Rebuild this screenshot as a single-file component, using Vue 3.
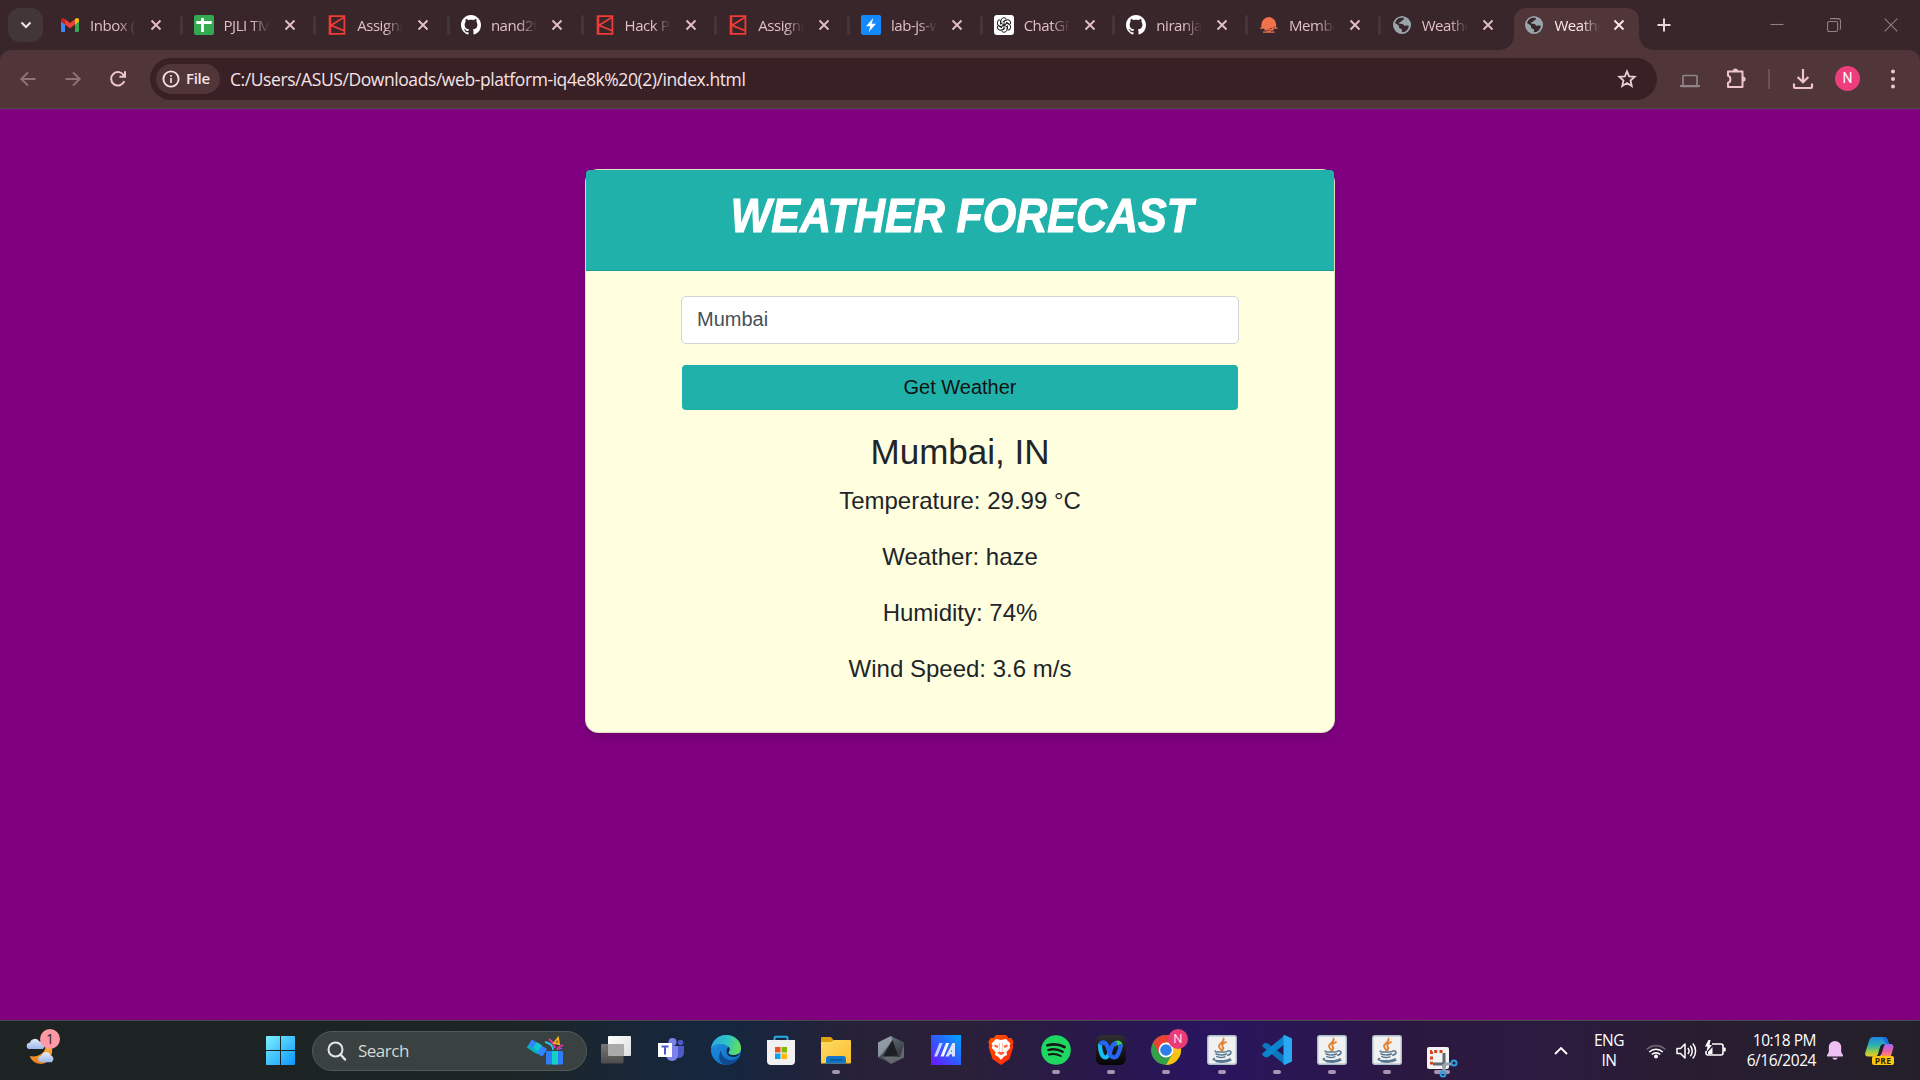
<script setup>
const kalvium = '<path fill="none" stroke="#f23b36" stroke-width="1.8" d="M2.6 1.2h14.8v17.6H2.6zM3.4 1.5v17M16.6 2.4L4 10.3l12.6 5.2"/>'
const github = '<path fill="#fff" transform="scale(1.25)" d="M8 0C3.58 0 0 3.58 0 8c0 3.54 2.29 6.53 5.47 7.59.4.07.55-.17.55-.38 0-.19-.01-.82-.01-1.49-2.01.37-2.53-.49-2.69-.94-.09-.23-.48-.94-.82-1.13-.28-.15-.68-.52-.01-.53.63-.01 1.08.58 1.23.82.72 1.21 1.87.87 2.33.66.07-.52.28-.87.51-1.07-1.78-.2-3.64-.89-3.64-3.95 0-.87.31-1.59.82-2.15-.08-.2-.36-1.02.08-2.12 0 0 .67-.21 2.2.82.64-.18 1.32-.27 2-.27s1.36.09 2 .27c1.53-1.04 2.2-.82 2.2-.82.44 1.1.16 1.92.08 2.12.51.56.82 1.27.82 2.15 0 3.07-1.87 3.75-3.65 3.95.29.25.54.73.54 1.48 0 1.07-.01 1.93-.01 2.2 0 .21.15.46.55.38A8.01 8.01 0 0 0 16 8c0-4.42-3.58-8-8-8z"/>'
const globe = '<circle cx="10" cy="10" r="8.8" fill="#9aa4ac"/><path fill="#38262a" d="M3 8c.2-2.800 2-5 5-5.600l3.500-.2c1 1.600.2 2.900-1.200 3.200-1.300.3-1.200 1.600-2.500 1.900-.9.300-1 1.200-.1 1.500 1.700.200 3.300-.1 4 1.100.700 1.200 2 .8 3.200.7 1.200 0 2 .2 1.900.9-.6 3.200-2.800 5.300-5.800 5.900-1.100.1-1.400-.9-1.100-1.700.4-1.200-.1-1.800-1.200-2-1.600-.200-2.100-1.400-1.500-2.600C6.500 9.600 4.500 9.400 3 8z"/><circle cx="10" cy="10" r="8.100" fill="none" stroke="#9aa4ac" stroke-width="1.400"/>'
const gmail = '<path fill="#4285f4" d="M1 6l4 3v8H2.200A1.200 1.200 0 0 1 1 15.800z"/><path fill="#34a853" d="M19 6l-4 3v8h2.800a1.200 1.200 0 0 0 1.200-1.200z"/><path fill="#ea4335" d="M5 4.200l5 3.900 5-3.900v5.200l-5 3.900-5-3.900z"/><path fill="#c5221f" d="M1 5c0-2 2-2.600 3.300-1.500L5 4.200v5.200L1 6.500z"/><path fill="#fbbc04" d="M19 5c0-2-2-2.600-3.300-1.500l-.7.700v5.200l4-2.900z"/>'
const sheets = '<rect width="20" height="20" rx="2" fill="#34a853"/><path d="M2.300 7.500h15.400M8.500 3v14" stroke="#fff" stroke-width="2.800"/>'
const bolt = '<rect width="20" height="20" rx="2" fill="#1389fd"/><path fill="#fff" d="M12.300 3L5 11.200h4.300L7.700 17 15 8.800h-4.300z"/>'
const gpt = '<rect width="20" height="20" rx="3" fill="#fff"/><g fill="none" stroke="#222" stroke-width="1">' +
  [0, 60, 120, 180, 240, 300].map((a) => `<path transform="rotate(${a} 10 10)" d="M6.900 8.200V5.900a3.100 3.100 0 0 1 5.600-1.900M6.900 8.200l3.100 1.700M8.700 6.800l3.400-2"/>`).join('') +
  '</g>'
const sunset = '<path fill="#f0714a" d="M1 13c.8-.3 1.200-.8 1.500-1.500A8 8 0 0 1 10 2a7.800 7.800 0 0 1 7 9.500c0 .5.700 1 1.500 1.200v1.100h-4v1.600h-3v1.100h4v1.200H4v-1.200h4v-1.100H5.500v-1.600H1z"/><path fill="#38262a" d="M11 13h1.500v1H11zM14.500 11.800h1v1.200h-1zM8 14.800h3v.7H8z"/>'

const tabs = [
  { t: 'Inbox (1', i: gmail },
  { t: 'PJLI TMS', i: sheets },
  { t: 'Assignm', i: kalvium },
  { t: 'nand2te', i: github },
  { t: 'Hack Pr', i: kalvium },
  { t: 'Assignm', i: kalvium },
  { t: 'lab-js-w', i: bolt },
  { t: 'ChatGPT', i: gpt },
  { t: 'niranjan', i: github },
  { t: 'Membe', i: sunset },
  { t: 'Weathe', i: globe },
  { t: 'Weathe', i: globe, active: true },
]

const java = '<rect x=".7" y=".7" width="28.600" height="28.600" rx="2" fill="#f1f1f1" stroke="#a9bcc8" stroke-width="1.400"/><g fill="none" stroke-linecap="round"><path stroke="#e5822e" stroke-width="1.800" d="M16.500 3.500c1.500 3.500-5 5-4.500 8 .2 1.600 2 2.400 2.500 4M19 7.200c-4 1.600-4.600 3-3.200 4.700 1 1.200.4 2.300-.4 3.100"/><path stroke="#58788f" stroke-width="1.500" d="M8.500 16c-2.500 1.300 10 1.500 12.500.1M9 18.800c1 1.300 8 1.500 10.500.2M9.800 21.500c1.500 1.300 6 1.300 8 .3M21 16c4-1 4 3.300-.3 4.200M7.500 23.500c-6 2 11 3.600 15.500.3M9 26.600c5 .8 12 .4 15-1.400"/></g>'

const apps = [
  { n: 'taskview', s: '<defs><linearGradient id="tv1" x2="0" y2="1"><stop stop-color="#777"/><stop offset="1" stop-color="#4c4c4c"/></linearGradient><linearGradient id="tv2" x2="1" y2="1"><stop stop-color="#fff"/><stop offset="1" stop-color="#ddd"/></linearGradient></defs><rect x="7" y="1" width="23" height="20" rx="1" fill="url(#tv2)"/><rect x="0" y="9" width="22.500" height="19.500" rx="1" fill="url(#tv1)"/><path d="M7 9h15.500v12H8a1 1 0 0 1-1-1z" fill="#aaa"/>' },
  { n: 'teams', s: '<circle cx="16.500" cy="7" r="4" fill="#7b83eb"/><circle cx="24.500" cy="7.500" r="2.800" fill="#5059c9"/><path fill="#5059c9" d="M19 11h9v7a5 5 0 0 1-5 5h-4z"/><path fill="#7b83eb" d="M10 11h12v9a6 6 0 0 1-12 0z"/><rect x="2" y="8" width="14" height="14" fill="#fff"/><path d="M5.500 11.500h7M9 11.500v8" stroke="#5059c9" stroke-width="2"/>' },
  { n: 'edge', s: '<defs><linearGradient id="ed1" y1=".3" x2="1" y2=".5"><stop stop-color="#2aa6e0"/><stop offset=".5" stop-color="#2bc3c6"/><stop offset="1" stop-color="#66e05a"/></linearGradient><linearGradient id="ed2" x2=".6" y2="1"><stop stop-color="#1d93e2"/><stop offset="1" stop-color="#1271c8"/></linearGradient></defs><circle cx="15" cy="15" r="15" fill="url(#ed2)"/><path fill="#104a8e" d="M10 15c0 7 6 11 12 10 3-.5 5.200-2 6-4C26 27 21 30 15 30 9 29 6 23 10 15z"/><path fill="url(#ed1)" d="M0 14C1 5 8 0 15 0c9 0 15 6 15 13 0 5-4 7-8 7-4 0-5.500-1.500-4.500-3 2-4-1.500-8-7-8C5 9 1 11 0 14z"/><path fill="#14294a" d="M17.500 11.500c1.600 1.500 1.700 3.300.4 5.300-1.200 1.800.6 3.300 4.600 3.300 3 0 5-.8 6.500-2.300-.8 2.700-3 4.200-6.500 4.200-6 0-9.500-5-5-10.500z"/>' },
  { n: 'store', s: '<path d="M8.500 7V2.700A1 1 0 0 1 9.500 1.700h11a1 1 0 0 1 1 1V7" fill="none" stroke="#29a9e1" stroke-width="2"/><path fill="#f1f1f1" d="M1 5h28v21a4 4 0 0 1-4 4H5a4 4 0 0 1-4-4z"/><path fill="#f25022" d="M9 12h5.500v5.500H9z"/><path fill="#7fba00" d="M15.500 12H21v5.500h-5.500z"/><path fill="#00a4ef" d="M9 18.500h5.500V24H9z"/><path fill="#ffb900" d="M15.500 18.500H21V24h-5.500z"/>' },
  { n: 'files', run: 1, s: '<defs><linearGradient id="fo" x2="1" y2="1"><stop stop-color="#ffdb68"/><stop offset="1" stop-color="#fbbd2c"/></linearGradient></defs><path fill="#dfa10e" d="M0 8V3.200A1.200 1.200 0 0 1 1.200 2H10l2.500 3v3z"/><path fill="url(#fo)" d="M0 7h10l3-2h16a1 1 0 0 1 1 1v21.500a1 1 0 0 1-1 1H0z"/><path fill="#1177c9" d="M5 28.500V24a3 3 0 0 1 3-3h14a3 3 0 0 1 3 3v4.500z"/><path d="M9 24.800h12" stroke="#0b4f94" stroke-width="1.300" stroke-linecap="round"/>' },
  { n: 'armoury', s: '<defs><linearGradient id="hx" x2=".6" y2="1"><stop stop-color="#6d7a88"/><stop offset="1" stop-color="#303238"/></linearGradient></defs><path fill="url(#hx)" d="M15 1l13 6.500v15L15 29 2 22.500v-15z"/><path fill="#aab5bf" d="M2 7.500L15 1l1.500 4L6 19l-4 3.500z" opacity=".65"/><path fill="#8b9097" d="M28 10v12.500L15 29 6 21.500l18 .5z" opacity=".55"/><path fill="#1c1f24" d="M16.500 5L22 20.500 7 21.500z"/>' },
  { n: 'myasus', s: '<defs><linearGradient id="ma" x1="0" y1="1" x2="1" y2="0"><stop stop-color="#6d12ff"/><stop offset=".5" stop-color="#2f5dff"/><stop offset="1" stop-color="#00a6ff"/></linearGradient></defs><rect width="30" height="30" fill="url(#ma)"/><path fill="#c3d2ff" d="M3 21.500L8.500 8h3.200L6.200 21.500z"/><path fill="#f2f5ff" d="M9.500 21.500L15 8h3.200l-5.500 13.500z"/><path fill="#dbe4ff" d="M14.500 21.500L21.500 8H24v13.500h-3V14.500l-3.200 7zM17.500 17h4v2.200h-4z"/>' },
  { n: 'brave', s: '<defs><linearGradient id="br" x2="1" y2="1"><stop stop-color="#ff5500"/><stop offset=".5" stop-color="#ff3a00"/><stop offset="1" stop-color="#ff2a14"/></linearGradient></defs><path fill="url(#br)" d="M10 0h10l2.500 3h3l2.200 4-1 3 .6 2-3.800 12L15 30 6.500 24 2.700 12l.6-2-1-3 2.200-4h3z"/><path fill="#fff" d="M10 4l5 1 5-1 4.500 4.500-1 2 .7 2.500-3.700 4 .5 3-3 1.500L15 25l-3-3.500L9 20l.5-3-3.700-4 .7-2.500-1-2z"/><path fill="#ff3b0a" d="M8 9.500l4.500 1.200-1 2.300L9 12zM22 9.500l-4.500 1.200 1 2.300L21 12zM13.500 8h3l-.3 8.500 2.800 1.200-4 2.500-4-2.500 2.800-1.200z" opacity=".8"/><path fill="#fff" d="M14 8h2v9h-2z"/>' },
  { n: 'spotify', run: 1, s: '<circle cx="15" cy="15" r="14.800" fill="#1ed760"/><g fill="none" stroke="#161616" stroke-linecap="round"><path stroke-width="2.700" d="M6.500 10.300c5.500-1.500 12-1 17 1.700"/><path stroke-width="2.300" d="M7.200 15c5-1.400 10-.8 14.500 1.800"/><path stroke-width="1.900" d="M7.800 19.500c4.300-1.100 8.200-.6 12 1.500"/></g>' },
  { n: 'webex', run: 1, s: '<defs><linearGradient id="wx" x2="0" y2="1"><stop stop-color="#303030"/><stop offset="1" stop-color="#050505"/></linearGradient></defs><rect width="30" height="30" rx="6" fill="url(#wx)"/><g fill="none" stroke-width="4.200" stroke-linecap="round"><path stroke="#16bdf2" d="M4 10c0 6 2 12.500 5.500 12.500 2 0 3.500-3 4.500-7"/><path stroke="#34d058" d="M19 9c2-2.300 5.500-1.500 5.500 2"/><path stroke="#2763f5" d="M5 8.200c5-3 7 4 8 8 1.500 7 6.500 8 9 3 1.300-2.600 2.500-5.500 2.600-8.200M14.500 16c1-4.500 2.500-7 4.500-7.500"/></g>' },
  { n: 'chrome', run: 1, badge: 'N', s: '<circle cx="15" cy="15" r="15" fill="#34a04c"/><path fill="#ea4335" d="M2 7.500A15 15 0 0 1 28 7.500H15L8.500 18.700z"/><path fill="#fbc116" d="M28 7.500A15 15 0 0 1 15 30l6.500-11.200L15 7.500z"/><circle cx="15" cy="15" r="7.400" fill="#fff"/><circle cx="15" cy="15" r="5.800" fill="#2b7de9"/>' },
  { n: 'java1', run: 1, s: java },
  { n: 'vscode', run: 1, s: '<path fill="#0c75bd" d="M0 10.500L2.600 8l3 .3L23 21.500V30L1 12z"/><path fill="#0a84cf" d="M0 19.800l3 2.500 2.800-.1L23 9V0L.5 18.300z"/><path fill="#29a9f2" d="M22.500 0L30 3.500v23L22.500 30c-.7 0-1-.5-1-1.200V1.200c0-.7.3-1.200 1-1.200z"/>' },
  { n: 'java2', run: 1, s: java },
  { n: 'java3', run: 1, s: java },
  { n: 'snip', run: 2, s: '<rect x="0" y="12" width="22" height="22" rx="2" fill="#f3f3f3"/><path fill="none" stroke="#d5431c" stroke-width="3" stroke-dasharray="3 2.300" d="M15.500 16.500h-11v13"/><path d="M17 18v15M6 29h13" stroke="#5d6a75" stroke-width="3"/><path d="M17 29v7M17 29h7" stroke="#98a5ad" stroke-width="3"/><g fill="none" stroke="#2ea0e0" stroke-width="2"><circle cx="27" cy="28" r="2.500"/><circle cx="16" cy="39" r="2.500"/></g>' },
]
</script>

<template>
  <div class="screen">
    <header class="strip">
      <div class="tab-search">
        <svg width="12" height="8" viewBox="0 0 12 8"><path d="M1.500 1.500L6 6l4.500-4.500" fill="none" stroke="#f6e4e7" stroke-width="2" /></svg>
      </div>
      <div class="tabs">
        <div v-for="(tab, k) in tabs" :key="k" class="tab" :class="{ active: tab.active, bare: k >= 10, wide: k > 0 && k < 5 }">
          <svg class="fav" width="20" height="20" viewBox="0 0 20 20" v-html="tab.i" />
          <span class="label">{{ tab.t }}</span>
          <svg class="x" width="12" height="12" viewBox="0 0 12 12"><path d="M1.500 1.500l9 9M10.500 1.500l-9 9" fill="none" stroke="currentColor" stroke-width="1.900" /></svg>
        </div>
      </div>
      <svg class="plus" width="14" height="14" viewBox="0 0 14 14"><path d="M7 .5v13M.5 7h13" stroke="#ecd3d8" stroke-width="2" /></svg>
      <div class="win">
        <svg width="14" height="14" viewBox="0 0 14 14"><path d="M.5 6.500h13" /></svg>
        <svg width="14" height="14" viewBox="0 0 14 14"><rect x=".6" y="3.500" width="10" height="10" rx="1.500" /><path d="M3 1.200Q3.500.6 4.500.6h6.500a2.500 2.500 0 0 1 2.500 2.500V10q0 1-.8 1.500" /></svg>
        <svg width="14" height="14" viewBox="0 0 14 14"><path d="M.7.7l12.600 12.600M13.300.7L.7 13.300" /></svg>
      </div>
    </header>

    <nav class="toolbar">
      <svg class="dim" width="16" height="16" viewBox="0 0 16 16"><path d="M15.500 8H1.500M8 1.300L1.300 8 8 14.700" /></svg>
      <svg class="dim fwd" width="16" height="16" viewBox="0 0 16 16"><path d="M.5 8h14M8 1.300L14.700 8 8 14.700" /></svg>
      <svg class="reload" width="18" height="18" viewBox="0 0 18 18"><path d="M15.300 11.200A6.800 6.800 0 1 1 15 5.700M16 1.300v5.400h-5.600" /></svg>
      <div class="omni">
        <div class="chip">
          <svg width="18" height="18" viewBox="0 0 18 18"><circle cx="9" cy="9" r="7.600" fill="none" stroke="#f5dfe3" stroke-width="1.900" /><path d="M9 8v5M9 5v1.700" stroke="#f5dfe3" stroke-width="1.700" /></svg>
          <span>File</span>
        </div>
        <span class="url">C:/Users/ASUS/Downloads/web-platform-iq4e8k%20(2)/index.html</span>
        <svg class="star" width="20" height="20" viewBox="0 0 20 20"><path d="M10 2.300l2.100 5 5.600.5-4.200 3.700 1.300 5.500L10 14.100 5.200 17l1.300-5.500-4.200-3.700 5.600-.5z" fill="none" stroke="#e6cfd3" stroke-width="1.800" /></svg>
      </div>
      <svg class="laptop" width="20" height="14" viewBox="0 0 20 14"><path d="M3 11V2.500a1 1 0 0 1 1-1h12a1 1 0 0 1 1 1V11" fill="none" stroke="#8d8587" stroke-width="1.700" /><path d="M0 11h20v1.200a1 1 0 0 1-1 1H1a1 1 0 0 1-1-1z" fill="#8d8587" /></svg>
      <svg class="ext" width="21" height="21" viewBox="0 0 21 21"><path fill="none" stroke="#f0c4cd" stroke-width="2" d="M2 3.500h14.500v15.500H2v-4.200c3.200-.5 3.200-6.600 0-7.100z" stroke-linejoin="round" /><path fill="#f0c4cd" d="M6.800 3a2.600 2.600 0 0 1 5.200 0zM17 8.500a2.600 2.600 0 0 1 0 5.200z" /></svg>
      <i class="bar" />
      <svg class="down" width="20" height="20" viewBox="0 0 20 20"><path d="M10 0v13M4.600 8L10 13.300 15.400 8M1 14.500V18q0 1 1 1h16q1 0 1-1v-3.500" fill="none" stroke="#f0c4cd" stroke-width="2.200" /></svg>
      <span class="avatar">N</span>
      <svg class="dots" width="4" height="20" viewBox="0 0 4 20"><g fill="#f0c4cd"><circle cx="2" cy="2.500" r="2" /><circle cx="2" cy="10" r="2" /><circle cx="2" cy="17.500" r="2" /></g></svg>
    </nav>

    <main class="page">
      <section class="card">
        <div class="card-head"><h1>WEATHER FORECAST</h1></div>
        <div class="card-body">
          <div class="field">Mumbai</div>
          <button class="btn">Get Weather</button>
          <h3>Mumbai, IN</h3>
          <p>Temperature: 29.99 °C</p>
          <p>Weather: haze</p>
          <p>Humidity: 74%</p>
          <p>Wind Speed: 3.6 m/s</p>
        </div>
      </section>
    </main>

    <footer class="taskbar">
      <div class="widget">
        <svg width="36" height="36" viewBox="0 0 36 36">
          <defs>
            <linearGradient id="cl" x2="0" y2="1"><stop stop-color="#e2ebfb" /><stop offset="1" stop-color="#9db8ec" /></linearGradient>
            <linearGradient id="mo" x2="0" y2="1"><stop stop-color="#f9b233" /><stop offset="1" stop-color="#ec7a1c" /></linearGradient>
          </defs>
          <path fill="url(#mo)" d="M3 26c8 2 16-2 18-10l7-1c2 10-3 20-12 20-6 0-11-3-13-9z" />
          <path fill="url(#cl)" d="M3 18a3.500 3.500 0 0 1 0-7 6 6 0 0 1 11-1.500A5 5 0 0 1 18 18z" />
          <path fill="url(#cl)" d="M16 33a3.500 3.500 0 0 1 0-7 5.500 5.500 0 0 1 10.500-1A4.500 4.500 0 0 1 28 33z" />
        </svg>
        <b>1</b>
      </div>
      <svg class="start" width="29" height="29" viewBox="0 0 29 29">
        <defs><linearGradient id="wi" gradientUnits="userSpaceOnUse" x2="29" y2="29"><stop stop-color="#7df1ff" /><stop offset="1" stop-color="#0a95fb" /></linearGradient></defs>
        <path fill="url(#wi)" d="M0 1q0-1 1-1h13v14H0zM15 0h13q1 0 1 1v13H15zM0 15h14v14H1q-1 0-1-1zM15 15h14v13q0 1-1 1H15z" />
      </svg>
      <div class="search">
        <svg width="20" height="20" viewBox="0 0 20 20"><circle cx="8.500" cy="8.500" r="7" fill="none" stroke="#e4e6e5" stroke-width="2" /><path d="M13.500 13.500l4.500 5" stroke="#e4e6e5" stroke-width="2.500" stroke-linecap="round" /></svg>
        <span>Search</span>
        <svg class="gift" width="38" height="30" viewBox="0 0 38 30">
          <g transform="rotate(32 10 12)"><rect x="2" y="7" width="18" height="9" rx="1" fill="#2f86ff" /><path fill="#12c8cc" d="M7.500 6.500h6v10h-6z" /><path fill="#08aebb" d="M2 13.500h11v3H2z" /></g>
          <rect x="20" y="15" width="17" height="13.500" rx="1" fill="#2f7df6" /><path fill="#13d1c4" d="M26 15h6v13.500h-6z" />
          <g fill="none" stroke-width="1.800"><path stroke="#2cc3e8" d="M27 14c0-5-3-7-8-8" /><path stroke="#ff2ea2" d="M29 12c-1-4-2-6-6-9M31 14c1-3 3-4 6-5" /><path stroke="#f7b21c" d="M28 7l4-5 1 6z" /><path stroke="#8d4bf0" d="M33 13l3-1" /></g>
        </svg>
      </div>
      <div class="apps">
        <div v-for="a in apps" :key="a.n" class="app">
          <svg width="30" height="30" viewBox="0 0 30 30" v-html="a.s" />
          <b v-if="a.badge">{{ a.badge }}</b>
          <i v-if="a.run" :class="{ wide: a.run === 2 }" />
        </div>
      </div>
      <div class="tray">
        <svg class="chev" width="14" height="9" viewBox="0 0 14 9"><path d="M1 8l6-6 6 6" fill="none" stroke="#fff" stroke-width="1.900" /></svg>
        <div class="lang"><span>ENG</span><span>IN</span></div>
        <svg class="wifi" width="20" height="16" viewBox="0 0 20 16"><g fill="none" stroke-width="1.700"><path stroke="#6a6270" d="M.8 6.500a13 13 0 0 1 18.400 0" /><path stroke="#fff" d="M3.300 9a9.500 9.500 0 0 1 13.400 0M5.800 11.500a6 6 0 0 1 8.400 0" /></g><circle cx="10" cy="13.600" r="2" fill="#fff" /></svg>
        <svg class="vol" width="21" height="18" viewBox="0 0 21 18"><g fill="none" stroke="#fff" stroke-width="1.500"><path d="M1 6.500h3.500L9 2v14l-4.500-4.500H1z" stroke-linejoin="round" /><path d="M11.800 6a4.500 4.500 0 0 1 0 6M14.300 3.800a8 8 0 0 1 0 10.400M16.800 1.500a11.500 11.500 0 0 1 0 15" /></g></svg>
        <svg class="bat" width="21" height="18" viewBox="0 0 21 18"><path d="M7 4h9a2 2 0 0 1 2 2v7a2 2 0 0 1-2 2H3a2 2 0 0 1-2-2v-2" fill="none" stroke="#fff" stroke-width="1.600" /><path fill="#fff" d="M18.500 7.500H20a.7.700 0 0 1 .7.700v2.600a.7.700 0 0 1-.7.700h-1.500zM3.500 0L0 6.500h2.500L1.500 12 7 5H4.500L5.500 0zM3 12l4.500-5v7H3z" /></svg>
        <div class="clock"><span>10:18 PM</span><span>6/16/2024</span></div>
        <svg class="bell" width="18" height="20" viewBox="0 0 18 20"><path fill="#efc0f3" d="M9 0a6.200 6.200 0 0 1 6.200 6.200V11l1.800 3.200c.3.600 0 1.300-.8 1.300H1.800c-.8 0-1.100-.7-.8-1.300L2.800 11V6.200A6.200 6.200 0 0 1 9 0zM6.300 16.700h5.400a2.800 2.800 0 0 1-5.400 0z" /></svg>
        <div class="copilot">
          <svg width="30" height="28" viewBox="0 0 30 28">
            <defs>
              <linearGradient id="c1" x2="0" y2="1"><stop stop-color="#1c84e8" /><stop offset=".45" stop-color="#2fb3a8" /><stop offset=".8" stop-color="#a9cf3c" /><stop offset="1" stop-color="#f2c827" /></linearGradient>
              <linearGradient id="c2" x2="0" y2="1"><stop stop-color="#a06bf5" /><stop offset=".6" stop-color="#ec5fa8" /><stop offset="1" stop-color="#ff8f5c" /></linearGradient>
            </defs>
            <path fill="url(#c1)" d="M8.500 0H19q3 0 4 4l1 3h-5q-3 0-4 3l-2 7q-1 2.500-3 2.500H3q-3.500 0-2.700-4L4 4q1-4 4.500-4z" />
            <path fill="#1a6fe0" d="M17 0h2q3 0 4 4l1 3h-3z" />
            <path fill="url(#c2)" d="M20 7h5.500q3.500 0 2.800 4l-2.300 8H14.500q1.500-.5 2.300-3L19 9z" />
          </svg>
          <em>PRE</em>
        </div>
      </div>
    </footer>
  </div>
</template>

<style>
body { margin: 0; overflow: hidden; }
</style>

<style scoped>
.screen { width: 1920px; height: 1080px; display: flex; flex-direction: column; overflow: hidden; background: #38262a; font-family: "Open Sans", "Noto Sans", sans-serif; }
.screen * { box-sizing: border-box; }
svg { display: block; flex: none; overflow: visible; }

.strip { height: 50px; display: flex; align-items: center; padding-left: 8px; flex: none; }
.tab-search { width: 35px; height: 34px; border-radius: 12px; background: #433639; display: flex; align-items: center; justify-content: center; }
.tabs { display: flex; margin-left: 5px; height: 50px; }
.tab { width: 132.700px; height: 50px; flex: none; display: flex; align-items: center; padding-left: 12px; color: #e3bfc6; position: relative; }
.tab:first-child { width: 133.500px; }
.tab.wide { width: 133.700px; }
.tab::after { content: ""; position: absolute; right: -1px; top: 15px; width: 3px; height: 20px; border-radius: 2px; background: #443539; }
.tab.bare::after { display: none; }
.label { width: 46px; margin: -1px 0 0 10px; font-size: 15px; letter-spacing: -.45px; line-height: 24px; white-space: nowrap; overflow: hidden; -webkit-mask-image: linear-gradient(90deg, #000 60%, transparent 100%); mask-image: linear-gradient(90deg, #000 60%, transparent 100%); }
.x { margin-left: 14px; }
.tab.active { color: #fbeaed; }
.tab.active .x { margin-left: 12.500px; }
.tab.active::before { content: ""; position: absolute; left: 1.800px; top: 8px; width: 124.500px; height: 42px; border-radius: 12px 12px 0 0; background: #503539; }
.tab.active > * { position: relative; }
.tab.active::after { display: block; left: -12.200px; right: auto; top: 36px; width: 152.500px; height: 14px; border-radius: 0; background: radial-gradient(circle at 0 0, transparent 13.500px, #503539 14px) 0 0 / 14px 14px no-repeat, radial-gradient(circle at 100% 0, transparent 13.500px, #503539 14px) 100% 0 / 14px 14px no-repeat; }
.plus { margin-left: 11.500px; }
.win { display: flex; gap: 43px; margin-left: auto; padding-right: 22px; }
.win svg { fill: none; stroke: #8d8184; stroke-width: 1.100; }

.toolbar { height: 59px; flex: none; display: flex; align-items: center; padding: 0 0 1px 20px; background: #503539; border-radius: 11px 11px 0 0; border-bottom: 1px solid #56464a; }
.dim { fill: none; stroke: #8e7377; stroke-width: 1.900; }
.fwd { margin-left: 29px; }
.reload { margin-left: 28px; fill: none; stroke: #efc5cd; stroke-width: 2; }
.omni { width: 1507px; height: 42px; margin-left: 23px; border-radius: 21px; background: #382025; display: flex; align-items: center; padding: 0 20px 0 6px; }
.chip { width: 64px; height: 30px; border-radius: 15px; background: #503539; display: flex; align-items: center; padding-left: 6px; gap: 6px; color: #f7e1e5; font-size: 15px; font-weight: 600; letter-spacing: -.3px; line-height: 28px; }
.chip span { margin-top: -1px; }
.url { margin-left: 10px; font-size: 17.500px; color: #f5e3e6; letter-spacing: -.42px; white-space: nowrap; padding-top: 1px; }
.star { margin-left: auto; }
.laptop { margin-left: 23px; margin-top: 5px; }
.ext { margin-left: 26px; margin-top: -1px; }
.bar { width: 2px; height: 20px; margin-left: 21px; background: #6d4f54; }
.down { margin-left: 23px; }
.avatar { width: 25px; height: 25px; border-radius: 50%; margin-left: 22px; background: #ee3d7b; color: #fff; font: 400 14px/25px Roboto, sans-serif; text-align: center; }
.dots { margin-left: 31px; }

.page { flex: 1; background: #800080; display: flex; justify-content: center; align-items: flex-start; padding-top: 60px; font-family: "Liberation Sans", Arial, sans-serif; color: #212529; }
.card { width: 750px; height: 564px; border: 1px solid #dfdfc3; border-radius: 13px; background: #ffffe0; box-shadow: 0 5px 10px rgba(0, 0, 0, .12); }
.card-head { height: 101px; background: #20b2aa; border-bottom: 1px solid #1d9f98; border-radius: 4px 4px 0 0; padding-top: 16px; }
h1 { margin: 0; color: #fff; font: italic 700 48px/60px "Liberation Sans", Arial, sans-serif; transform: scaleX(.895); text-indent: 4px; -webkit-text-stroke: 1.200px #fff; text-align: center; white-space: nowrap; }
.card-body { display: flex; flex-direction: column; align-items: center; padding-top: 25px; }
.field { width: 558px; height: 48px; border: 1px solid #ced4da; border-radius: 5px; background: #fff; padding-left: 15px; font-size: 20px; line-height: 45px; color: #495057; }
.btn { width: 556px; height: 45px; margin-top: 21px; border: 0; border-radius: 4px; background: #20b2aa; font: 20px/42px "Liberation Sans", Arial, sans-serif; padding: 0 0 2px; color: #111; }
h3 { margin: 21px 0 10px; font-weight: 400; font-size: 35px; line-height: 42px; }
p { margin: 0 0 20px; font-size: 24px; line-height: 36px; }

.taskbar { height: 60px; flex: none; border-top: 1px solid #4a454c; display: flex; align-items: center; background: linear-gradient(90deg, #1d2322 0, #1c2524 500px, #182638 640px, #15263f 730px, #272137 860px, #2a2038 960px, #28184a 1090px, #2a1560 1210px, #2b183f 1420px, #2c1b40 1540px, #281d30 1700px, #24202b 1920px); }
.widget { position: relative; width: 36px; height: 36px; margin-left: 26px; }
.widget svg { margin: -2px 0 0 -1px; transform: scale(.88); }
.widget b { position: absolute; left: 14px; top: -4px; width: 20px; height: 20px; border-radius: 50%; background: #ff9aa5; color: #33201f; font-weight: 400; font-size: 14px; line-height: 20px; text-align: center; }
.start { margin-left: 204px; }
.search { width: 275px; height: 40px; margin-left: 17px; border-radius: 20px; border: 1px solid #525a59; background: #3a4241; display: flex; align-items: center; padding: 0 22px 0 14px; }
.search span { margin: -1px 0 0 11px; color: #d3d7d6; font-size: 17px; letter-spacing: -.5px; }
.gift { margin-left: auto; }
.apps { display: flex; margin-left: 1px; }
.app { width: 55.100px; height: 59px; flex: none; position: relative; display: flex; flex-direction: column; align-items: center; padding-top: 14px; }
.app i { position: absolute; left: 50%; margin-left: -4px; top: 49px; width: 8px; height: 4px; border-radius: 2px; background: #a596b4; }
.app i.wide { width: 16px; margin-left: -8px; z-index: -1; }
.app:last-child { z-index: 0; }
.app b { position: absolute; left: 29px; top: 8px; width: 20px; height: 20px; border-radius: 50%; background: #ea3b78; color: #ffd3e0; font: 400 13px/20px Roboto, sans-serif; text-align: center; }
.tray { display: flex; align-items: center; margin-left: 84.500px; color: #fff; font-size: 15.500px; line-height: 20px; height: 59px; }
.lang { width: 40px; margin-left: 21px; display: flex; flex-direction: column; align-items: center; letter-spacing: -.5px; }
.wifi { margin-left: 17px; }
.vol { margin-left: 10px; }
.bat { margin-left: 8px; margin-top: -3px; }
.clock { width: 80px; margin-left: 10px; display: flex; flex-direction: column; align-items: flex-end; letter-spacing: -.45px; white-space: nowrap; }
.lang, .clock { margin-top: -2px; }
.bell { margin-left: 10px; }
.copilot { position: relative; width: 30px; height: 28px; margin-left: 21px; }
.copilot em { position: absolute; left: 7px; top: 19px; width: 22px; height: 9px; border-radius: 2px; background: #ffc40c; color: #2b2200; font: 700 8.500px/9px "Open Sans", sans-serif; letter-spacing: .3px; text-align: center; }
</style>
